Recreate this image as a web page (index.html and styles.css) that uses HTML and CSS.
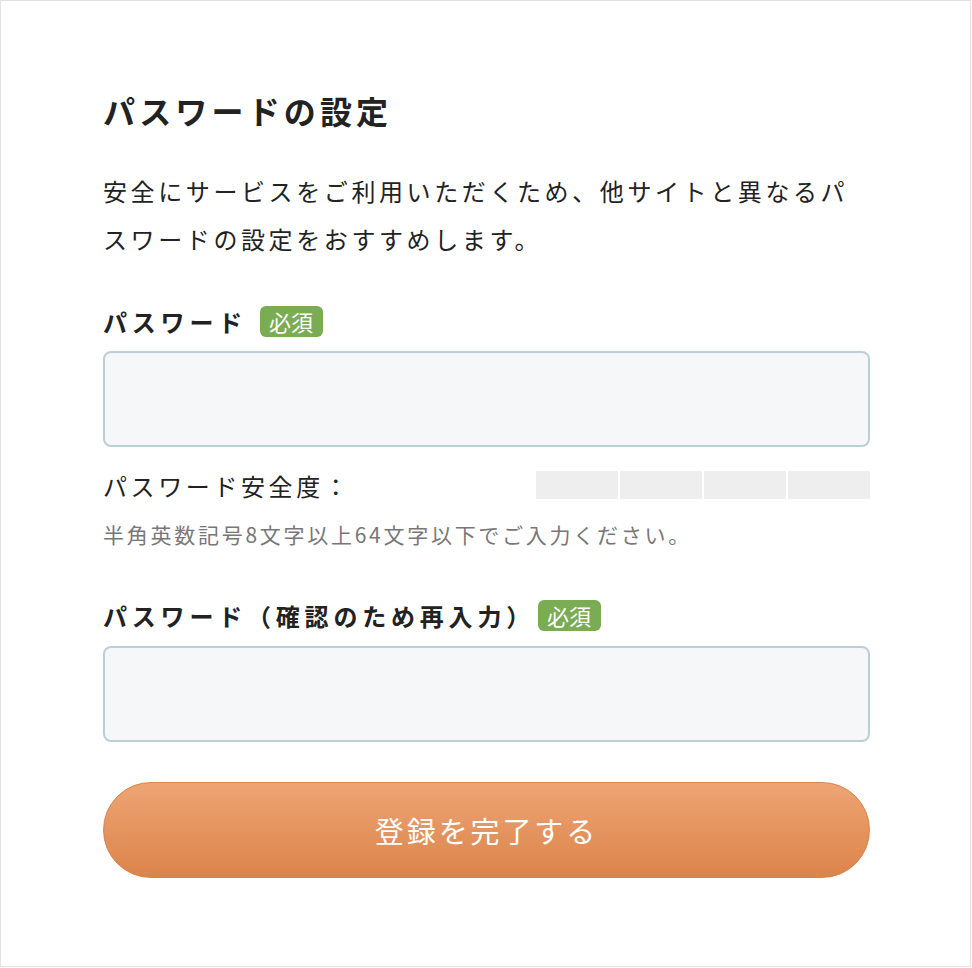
FILE: index.html
```html
<!DOCTYPE html>
<html lang="ja">
<head>
  <meta charset="UTF-8">
  <meta name="viewport" content="width=device-width, initial-scale=1.0">
  <title>パスワードの設定</title>
  <link rel="stylesheet" href="styles.css">
</head>
<body>
  <div class="page">
    <h1 class="title">パスワードの設定</h1>
    <p class="lead">安全にサービスをご利用いただくため、他サイトと異なるパスワードの設定をおすすめします。</p>

    <!-- Password -->
    <div class="field-label">
      <span>パスワード</span>
      <span class="required">必須</span>
    </div>
    <input class="text-input" type="password">

    <div class="strength">
      <span class="strength-label">パスワード安全度：</span>
      <div class="strength-bars">
        <span></span><span></span><span></span><span></span>
      </div>
    </div>
    <p class="hint">半角英数記号8文字以上64文字以下でご入力ください。</p>

    <!-- Password confirm -->
    <div class="field-label field-label-second">
      <span>パスワード（確認のため再入力）</span>
      <span class="required required-after-paren">必須</span>
    </div>
    <input class="text-input text-input-second" type="password">

    <button class="submit-button">登録を完了する</button>
  </div>
</body>
</html>
```

FILE: styles.css
```css
body {
  margin: 0;
  background-color: #fff;
  font-family: 'Noto Sans CJK JP', 'Noto Sans', sans-serif;
  color: #222;
}

.page {
  box-sizing: border-box;
  width: 971px;
  height: 967px;
  border: 1px solid #e2e2e2;
  padding: 85px 100px 0 102px;
}

.title {
  margin: 0;
  font-size: 32px;
  line-height: 48px;
  font-weight: bold;
  letter-spacing: 0.13em;
}

.lead {
  margin: 33px 0 0;
  font-size: 24px;
  line-height: 48px;
  letter-spacing: 0.15em;
}

.field-label {
  display: flex;
  align-items: center;
  margin-top: 42px;
  height: 32px;
  font-size: 24px;
  font-weight: bold;
  letter-spacing: 0.2em;
}

.field-label-second {
  margin-top: 50px;
}

.required {
  margin-left: 13px;
  padding: 0 10px 0 9px;
  height: 31px;
  line-height: 31px;
  border-radius: 6px;
  background-color: #79ac53;
  color: #fff;
  font-size: 22px;
  font-weight: normal;
  letter-spacing: 0;
}

/* the full-width paren already leaves room */
.required-after-paren {
  margin-left: 3px;
}

.text-input {
  display: block;
  box-sizing: border-box;
  width: 767px;
  height: 96px;
  margin-top: 14px;
  border: 2px solid #bccfd9;
  border-radius: 8px;
  background-color: #f5f7f9;
  font-size: 24px;
  padding: 0 20px;
}

.text-input-second {
  margin-top: 15px;
}

.text-input:focus {
  outline: none;
}

.strength {
  display: flex;
  align-items: center;
  justify-content: space-between;
  width: 767px;
  height: 28px;
  margin-top: 24px;
}

.strength-label {
  font-size: 24px;
  letter-spacing: 0.15em;
}

.strength-bars {
  display: flex;
  gap: 2px;
  width: 334px;
  height: 28px;
}

.strength-bars span {
  flex: 1;
  background-color: #eeeeee;
}

.hint {
  margin: 20px 0 0;
  font-size: 21px;
  line-height: 30px;
  color: #777;
  letter-spacing: 0.13em;
}

.submit-button {
  display: block;
  box-sizing: border-box;
  width: 767px;
  height: 96px;
  margin-top: 40px;
  border: 1px solid #d9834b;
  border-radius: 48px;
  background: linear-gradient(to bottom, #eea474, #db844a);
  color: #fff;
  font-family: inherit;
  font-size: 29px;
  letter-spacing: 0.1em;
  cursor: pointer;
}
```
